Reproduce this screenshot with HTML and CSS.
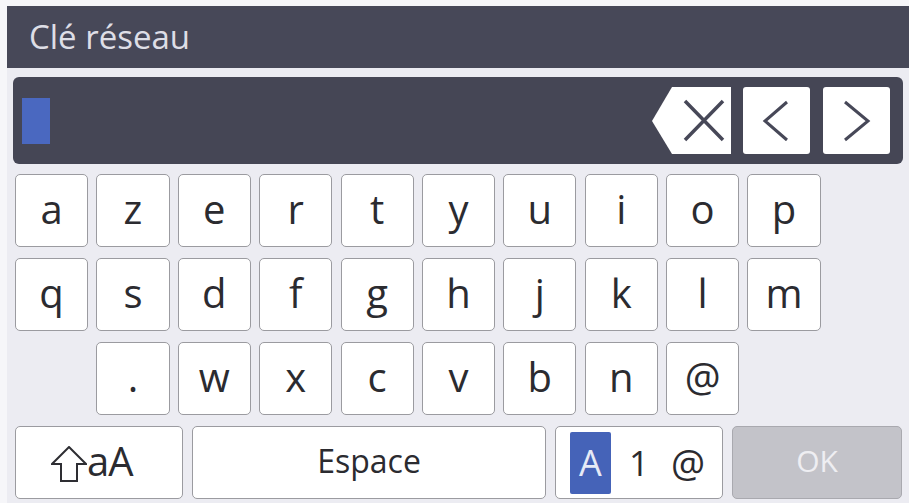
FILE: index.html
```html
<!DOCTYPE html>
<html lang="fr">
<head>
<meta charset="utf-8">
<title>Clé réseau</title>
<link rel="stylesheet" href="styles.css">
</head>
<body>
<div class="screen">
  <div class="titlebar">Clé réseau</div>
  <div class="input">
    <div class="cursor"></div>
    <div class="spacer"></div>
    <div class="backspace">
      <svg width="79" height="67" viewBox="0 0 79 67">
        <polygon points="0,34 20,0 79,0 79,67 20,67" fill="#ffffff"/>
        <path d="M33 14 L71 53 M71 14 L33 53" stroke="#474858" stroke-width="3.5" fill="none"/>
      </svg>
    </div>
    <div class="navbtn">
      <svg width="67" height="67" viewBox="0 0 67 67">
        <polyline points="44,15 22,34 44,53" stroke="#474858" stroke-width="3" fill="none"/>
      </svg>
    </div>
    <div class="navbtn">
      <svg width="67" height="67" viewBox="0 0 67 67">
        <polyline points="22,15 45,34 22,53" stroke="#474858" stroke-width="3" fill="none"/>
      </svg>
    </div>
  </div>
  <div class="keyboard">
    <div class="row">
      <div class="key">a</div><div class="key">z</div><div class="key">e</div><div class="key">r</div><div class="key">t</div><div class="key">y</div><div class="key">u</div><div class="key">i</div><div class="key">o</div><div class="key">p</div>
    </div>
    <div class="row">
      <div class="key">q</div><div class="key">s</div><div class="key">d</div><div class="key">f</div><div class="key">g</div><div class="key">h</div><div class="key">j</div><div class="key">k</div><div class="key">l</div><div class="key">m</div>
    </div>
    <div class="row">
      <div class="blank"></div><div class="key">.</div><div class="key">w</div><div class="key">x</div><div class="key">c</div><div class="key">v</div><div class="key">b</div><div class="key">n</div><div class="key">@</div>
    </div>
    <div class="row bottom">
      <div class="key shift">
        <svg width="36" height="36" viewBox="0 0 36 36">
          <path d="M18 1 L35 18 L26 18 L26 35 L10 35 L10 18 L1 18 Z" fill="none" stroke="#2e2e33" stroke-width="2" stroke-linejoin="miter"/>
        </svg>
        <span>aA</span>
      </div>
      <div class="key space">Espace</div>
      <div class="key mode">
        <span class="sel">A</span>
        <span class="m1">1</span>
        <span class="m2">@</span>
      </div>
      <div class="key ok">OK</div>
    </div>
  </div>
</div>
</body>
</html>
```
FILE: styles.css
```css
html, body {
  margin: 0;
  padding: 0;
  background: #f6f6f9;
  width: 909px;
  height: 503px;
  overflow: hidden;
  font-family: "Open Sans", "Noto Sans", sans-serif;
}

.screen {
  margin: 6px 0 0 7px;
  height: 497px;
  background: #ececf2;
  display: flex;
  flex-direction: column;
}

.titlebar {
  height: 62px;
  background: #474858;
  color: #dedee6;
  font-size: 33px;
  line-height: 62px;
  padding-left: 22px;
  box-sizing: border-box;
}

.input {
  margin: 9px 6px 0 6px;
  height: 87px;
  background: #454655;
  border-radius: 6px;
  display: flex;
  align-items: center;
  padding-right: 13px;
}

.cursor {
  width: 28px;
  height: 46px;
  margin-left: 9px;
  background: #4a68c0;
}

.spacer {
  flex: 1;
}

.backspace {
  width: 79px;
  height: 67px;
  margin-right: 12px;
}

.backspace svg, .navbtn svg {
  display: block;
}

.navbtn {
  width: 67px;
  height: 67px;
  background: #ffffff;
  border-radius: 3px;
}

.navbtn + .navbtn {
  margin-left: 13px;
}

.keyboard {
  display: flex;
  flex-direction: column;
  gap: 11px;
  padding: 10px 0 0 8px;
}

.row {
  display: flex;
  gap: 8.2px;
  height: 73px;
}

.key, .blank {
  width: 73.2px;
  height: 73px;
  box-sizing: border-box;
}

.key {
  background: #ffffff;
  border: 1.5px solid #9b9ba0;
  border-radius: 5px;
  display: flex;
  align-items: center;
  justify-content: center;
  font-size: 40px;
  color: #2b2b30;
  line-height: 1;
  padding-bottom: 3px;
}

.row.bottom {
  gap: 9px;
}

.shift {
  width: 168px;
  justify-content: flex-start;
  padding: 0 0 0 35px;
}

.shift svg {
  margin-top: 2px;
}

.shift span {
  font-size: 40px;
  margin-top: -4px;
  letter-spacing: -1px;
}

.space {
  width: 354px;
  font-size: 32px;
}

.mode {
  width: 168px;
  justify-content: flex-start;
  padding: 0 0 0 14px;
}

.mode .sel {
  width: 41px;
  height: 62px;
  background: #4563b8;
  color: #e6eaf6;
  border-radius: 2px;
  display: flex;
  align-items: center;
  justify-content: center;
  font-size: 36px;
}

.mode .m1 {
  font-size: 35px;
  margin-left: 18px;
}

.mode .m2 {
  font-size: 38px;
  margin-left: 22px;
}

.ok {
  width: 170px;
  background: #c3c3c9;
  border-color: #a9a9af;
  color: #eeeef2;
  font-size: 30px;
}
```
